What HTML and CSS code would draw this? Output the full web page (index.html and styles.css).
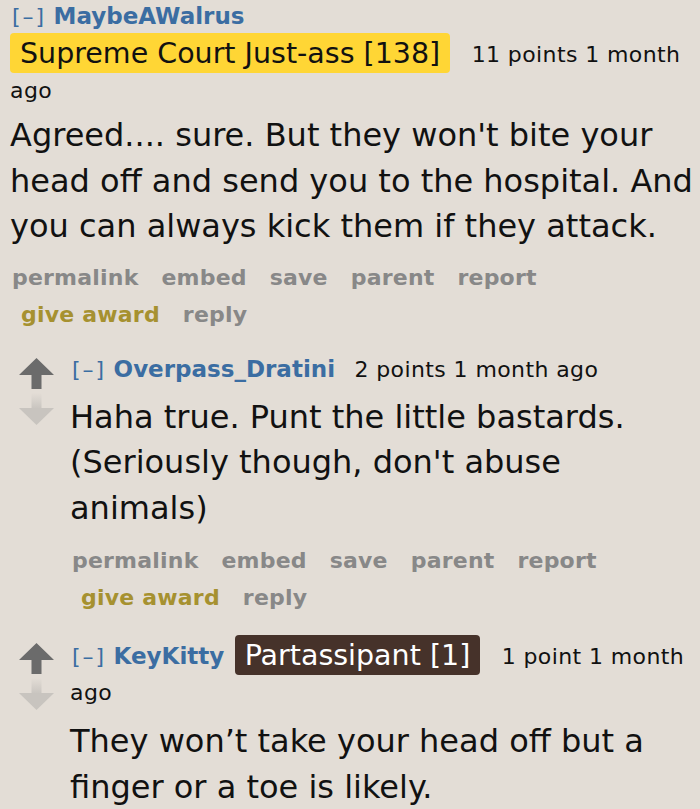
FILE: index.html
```html
<!DOCTYPE html>
<html lang="en">
<head>
<meta charset="utf-8">
<title>Comments</title>
<link rel="stylesheet" href="styles.css">
</head>
<body>
<div class="page">
  <div class="comment top">
    <div class="entry">
      <p class="tagline"><span class="expand">[–]</span> <a class="author">MaybeAWalrus</a> <span class="flair flair-yellow">Supreme Court Just-ass [138]</span> <span class="score">11 points</span> <time>1 month ago</time></p>
      <div class="md">Agreed.... sure. But they won't bite your head off and send you to the hospital. And you can always kick them if they attack.</div>
      <div class="buttons">
        <ul class="btn-row">
          <li>permalink</li><li>embed</li><li>save</li><li>parent</li><li>report</li>
        </ul>
        <ul class="btn-row btn-row-second">
          <li class="award">give award</li><li>reply</li>
        </ul>
      </div>
    </div>
  </div>

  <div class="comment child">
    <div class="midcol">
      <svg class="arrows" width="36" height="68" viewBox="0 0 36 68">
        <defs>
          <linearGradient id="fade1" x1="0" y1="0" x2="0" y2="1">
            <stop offset="0" stop-color="#c8c4bf" stop-opacity="0"/>
            <stop offset="1" stop-color="#c8c4bf"/>
          </linearGradient>
        </defs>
        <path d="M0 17 L17.5 0 L35 17 L22.5 17 L22.5 31 L12.5 31 L12.5 17 Z" fill="#6b6b6b"/>
        <rect x="12.5" y="35" width="10" height="16" fill="url(#fade1)"/>
        <path d="M0 50 L35 50 L17.5 67 Z" fill="#c8c4bf"/>
      </svg>
    </div>
    <div class="entry">
      <p class="tagline"><span class="expand">[–]</span> <a class="author">Overpass_Dratini</a> <span class="score">2 points</span> <time>1 month ago</time></p>
      <div class="md">Haha true. Punt the little bastards. (Seriously though, don't abuse animals)</div>
      <div class="buttons">
        <ul class="btn-row">
          <li>permalink</li><li>embed</li><li>save</li><li>parent</li><li>report</li>
        </ul>
        <ul class="btn-row btn-row-second">
          <li class="award">give award</li><li>reply</li>
        </ul>
      </div>
    </div>
  </div>

  <div class="comment child last">
    <div class="midcol">
      <svg class="arrows" width="36" height="68" viewBox="0 0 36 68">
        <defs>
          <linearGradient id="fade2" x1="0" y1="0" x2="0" y2="1">
            <stop offset="0" stop-color="#c8c4bf" stop-opacity="0"/>
            <stop offset="1" stop-color="#c8c4bf"/>
          </linearGradient>
        </defs>
        <path d="M0 17 L17.5 0 L35 17 L22.5 17 L22.5 31 L12.5 31 L12.5 17 Z" fill="#6b6b6b"/>
        <rect x="12.5" y="35" width="10" height="16" fill="url(#fade2)"/>
        <path d="M0 50 L35 50 L17.5 67 Z" fill="#c8c4bf"/>
      </svg>
    </div>
    <div class="entry">
      <p class="tagline"><span class="expand">[–]</span> <a class="author">KeyKitty</a> <span class="flair flair-dark">Partassipant [1]</span> <span class="score">1 point</span> <time>1 month ago</time></p>
      <div class="md">They won’t take your head off but a finger or a toe is likely.</div>
    </div>
  </div>
</div>
</body>
</html>
```

FILE: styles.css
```css
html, body {
  margin: 0;
  padding: 0;
  background: #e3ddd6;
}

body {
  font-family: "DejaVu Sans", Verdana, sans-serif;
  color: #111;
  overflow: hidden;
}

.page {
  padding: 0 2px 0 10px;
}

.comment {
  display: flex;
}

.comment.top {
  margin-top: -2px;
}

.comment.child {
  margin-top: 18px;
}

.comment.child.last {
  margin-top: 21px;
}

.midcol {
  width: 60px;
  flex: none;
  padding-left: 9px;
  box-sizing: border-box;
}

.comment.child .arrows {
  display: block;
  margin-top: 7px;
}

.comment.last .arrows {
  margin-top: 6px;
}

.entry {
  flex: 1;
  min-width: 0;
}

.tagline {
  margin: 0;
  padding-right: 6px;
  font-size: 22px;
  line-height: 36px;
  letter-spacing: 0.4px;
}

.expand {
  color: #3b6da2;
  letter-spacing: 2px;
  padding-left: 2px;
}

.author {
  color: #3b6da2;
  font-weight: bold;
  font-size: 23px;
  letter-spacing: 0;
  margin-right: 3px;
}

.flair {
  font-size: 28.5px;
  padding: 3.5px 10px;
  border-radius: 4px;
  margin-right: 5px;
  letter-spacing: 0;
  white-space: nowrap;
}

.flair-yellow {
  background: #ffd635;
  color: #111;
}

.flair-dark {
  background: #46322a;
  color: #fff;
}

.score {
  margin-left: 9px;
}

.md {
  font-size: 32px;
  line-height: 45.5px;
  margin-top: 4px;
}

.comment.child .md {
  margin-top: 7px;
}

.comment.last .md {
  margin-top: 8px;
}

.buttons {
  margin-top: 9px;
}

.comment.child .buttons {
  margin-top: 11px;
}

.btn-row {
  display: flex;
  gap: 23px;
  list-style: none;
  margin: 0;
  padding: 0 0 0 2px;
  font-size: 22px;
  font-weight: bold;
  line-height: 37px;
  color: #888;
  letter-spacing: 0.2px;
}

.btn-row-second {
  padding-left: 11px;
}

.award {
  color: #a69130;
}
```
